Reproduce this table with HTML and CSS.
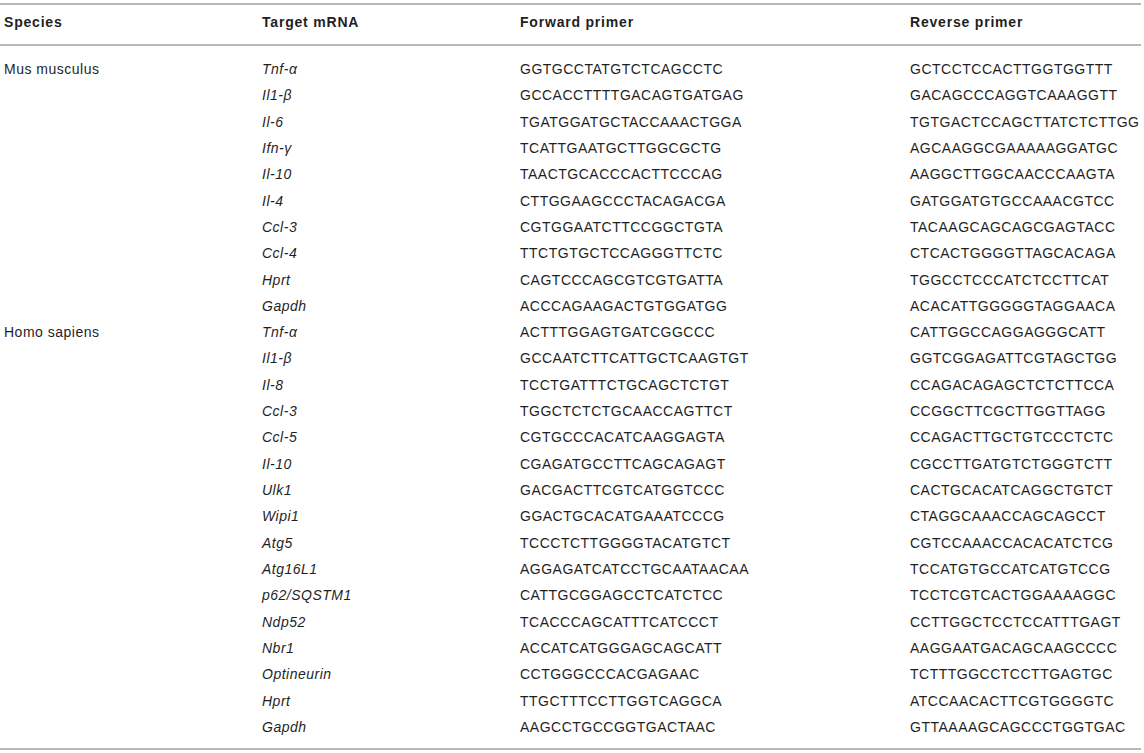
FILE: index.html
```html
<!DOCTYPE html>
<html>
<head>
<meta charset="utf-8">
<link rel="stylesheet" href="styles.css">
</head>
<body>
<table class="primers">
<colgroup><col class="c1"><col class="c2"><col class="c3"><col class="c4"></colgroup>
<thead>
<tr><th>Species</th><th>Target mRNA</th><th>Forward primer</th><th>Reverse primer</th></tr>
</thead>
<tbody>
<tr class="first"><td>Mus musculus</td><td class="gene">Tnf-α</td><td>GGTGCCTATGTCTCAGCCTC</td><td>GCTCCTCCACTTGGTGGTTT</td></tr>
<tr><td></td><td class="gene">Il1-β</td><td>GCCACCTTTTGACAGTGATGAG</td><td>GACAGCCCAGGTCAAAGGTT</td></tr>
<tr><td></td><td class="gene">Il-6</td><td>TGATGGATGCTACCAAACTGGA</td><td>TGTGACTCCAGCTTATCTCTTGG</td></tr>
<tr><td></td><td class="gene">Ifn-γ</td><td>TCATTGAATGCTTGGCGCTG</td><td>AGCAAGGCGAAAAAGGATGC</td></tr>
<tr><td></td><td class="gene">Il-10</td><td>TAACTGCACCCACTTCCCAG</td><td>AAGGCTTGGCAACCCAAGTA</td></tr>
<tr><td></td><td class="gene">Il-4</td><td>CTTGGAAGCCCTACAGACGA</td><td>GATGGATGTGCCAAACGTCC</td></tr>
<tr><td></td><td class="gene">Ccl-3</td><td>CGTGGAATCTTCCGGCTGTA</td><td>TACAAGCAGCAGCGAGTACC</td></tr>
<tr><td></td><td class="gene">Ccl-4</td><td>TTCTGTGCTCCAGGGTTCTC</td><td>CTCACTGGGGTTAGCACAGA</td></tr>
<tr><td></td><td class="gene">Hprt</td><td>CAGTCCCAGCGTCGTGATTA</td><td>TGGCCTCCCATCTCCTTCAT</td></tr>
<tr><td></td><td class="gene">Gapdh</td><td>ACCCAGAAGACTGTGGATGG</td><td>ACACATTGGGGGTAGGAACA</td></tr>
<tr><td>Homo sapiens</td><td class="gene">Tnf-α</td><td>ACTTTGGAGTGATCGGCCC</td><td>CATTGGCCAGGAGGGCATT</td></tr>
<tr><td></td><td class="gene">Il1-β</td><td>GCCAATCTTCATTGCTCAAGTGT</td><td>GGTCGGAGATTCGTAGCTGG</td></tr>
<tr><td></td><td class="gene">Il-8</td><td>TCCTGATTTCTGCAGCTCTGT</td><td>CCAGACAGAGCTCTCTTCCA</td></tr>
<tr><td></td><td class="gene">Ccl-3</td><td>TGGCTCTCTGCAACCAGTTCT</td><td>CCGGCTTCGCTTGGTTAGG</td></tr>
<tr><td></td><td class="gene">Ccl-5</td><td>CGTGCCCACATCAAGGAGTA</td><td>CCAGACTTGCTGTCCCTCTC</td></tr>
<tr><td></td><td class="gene">Il-10</td><td>CGAGATGCCTTCAGCAGAGT</td><td>CGCCTTGATGTCTGGGTCTT</td></tr>
<tr><td></td><td class="gene">Ulk1</td><td>GACGACTTCGTCATGGTCCC</td><td>CACTGCACATCAGGCTGTCT</td></tr>
<tr><td></td><td class="gene">Wipi1</td><td>GGACTGCACATGAAATCCCG</td><td>CTAGGCAAACCAGCAGCCT</td></tr>
<tr><td></td><td class="gene">Atg5</td><td>TCCCTCTTGGGGTACATGTCT</td><td>CGTCCAAACCACACATCTCG</td></tr>
<tr><td></td><td class="gene">Atg16L1</td><td>AGGAGATCATCCTGCAATAACAA</td><td>TCCATGTGCCATCATGTCCG</td></tr>
<tr><td></td><td class="gene">p62/SQSTM1</td><td>CATTGCGGAGCCTCATCTCC</td><td>TCCTCGTCACTGGAAAAGGC</td></tr>
<tr><td></td><td class="gene">Ndp52</td><td>TCACCCAGCATTTCATCCCT</td><td>CCTTGGCTCCTCCATTTGAGT</td></tr>
<tr><td></td><td class="gene">Nbr1</td><td>ACCATCATGGGAGCAGCATT</td><td>AAGGAATGACAGCAAGCCCC</td></tr>
<tr><td></td><td class="gene">Optineurin</td><td>CCTGGGCCCACGAGAAC</td><td>TCTTTGGCCTCCTTGAGTGC</td></tr>
<tr><td></td><td class="gene">Hprt</td><td>TTGCTTTCCTTGGTCAGGCA</td><td>ATCCAACACTTCGTGGGGTC</td></tr>
<tr class="last"><td></td><td class="gene">Gapdh</td><td>AAGCCTGCCGGTGACTAAC</td><td>GTTAAAAGCAGCCCTGGTGAC</td></tr>
</tbody>
</table>
</body>
</html>
```
FILE: styles.css
```css
html, body {
  margin: 0;
  padding: 0;
  background: #ffffff;
}
body {
  padding-top: 3px;
  font-family: "Liberation Sans", Arial, sans-serif;
  font-size: 14px;
  color: #1f1f1f;
}
.primers {
  width: 1141px;
  border-collapse: collapse;
  table-layout: fixed;
  border-top: 2px solid #b8b8b8;
  border-bottom: 2px solid #b8b8b8;
}
.c1 { width: 258px; }
.c2 { width: 258px; }
.c3 { width: 390px; }
.c4 { width: 235px; }
.primers th {
  text-align: left;
  font-weight: bold;
  padding: 7px 0 12px 4px;
  line-height: 20px;
  border-bottom: 2px solid #b8b8b8;
  letter-spacing: 0.8px;
}
.primers td {
  padding: 0 0 0 4px;
  height: 26.32px;
  line-height: 26.32px;
  white-space: nowrap;
  letter-spacing: 0.5px;
  vertical-align: top;
}
.primers td.gene {
  font-style: italic;
}
.primers tr.first td {
  padding-top: 10px;
}
.primers tr.last td {
  padding-bottom: 7.7px;
}
```
